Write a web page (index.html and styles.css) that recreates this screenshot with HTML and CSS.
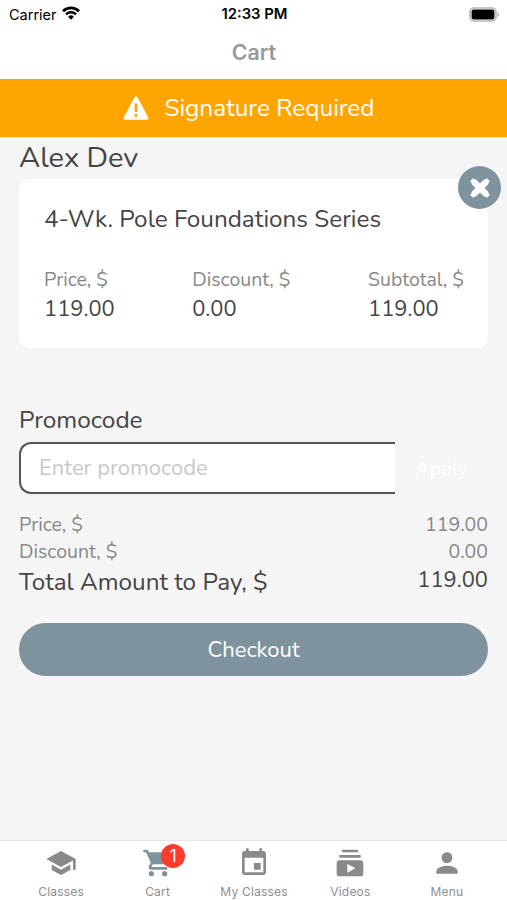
FILE: index.html
```html
<!DOCTYPE html>
<html lang="en">
<head>
  <meta charset="utf-8">
  <title>Cart</title>
  <meta name="viewport" content="width=device-width, initial-scale=1">
  <link rel="stylesheet" href="styles.css">
</head>
<body>
  <div class="status-bar">
    <div class="carrier">
      <span>Carrier</span>
      <svg class="wifi" viewBox="0 0 18 14" width="18" height="14">
        <path d="M1 5.2a11.5 11.5 0 0 1 16 0" fill="none" stroke="#000" stroke-width="2.8"/>
        <path d="M4 8.3a7.2 7.2 0 0 1 10 0" fill="none" stroke="#000" stroke-width="2.4"/>
        <path d="M9 13.7 6.1 10.7a4.2 4.2 0 0 1 5.8 0z"/>
      </svg>
    </div>
    <div class="time">12:33 PM</div>
    <svg class="battery" viewBox="0 0 31 15" width="31" height="15">
      <rect x="1" y="1" width="26" height="13" rx="4" fill="#fff" stroke="#b5b5b5" stroke-width="1.6"/>
      <rect x="2.6" y="2.6" width="22.8" height="9.8" rx="2"/>
      <path d="M28.5 5.5c2 .6 2 3.4 0 4z" fill="#b5b5b5"/>
    </svg>
  </div>

  <header class="title-bar"><h1>Cart</h1></header>

  <div class="banner">
    <svg viewBox="0 0 26 24" width="26" height="24">
      <path d="M11.3 1.5a2 2 0 0 1 3.4 0L25 21c.8 1.4.1 2.8-1.5 2.8h-21C.9 23.8.2 22.4 1 21z" fill="#fff"/>
      <path d="M13 7.5v8.5" stroke="#ffa500" stroke-width="2.6"/>
      <circle cx="13" cy="19.3" r="1.6" fill="#ffa500"/>
    </svg>
    <span>Signature Required</span>
  </div>

  <main>
    <h2 class="client">Alex Dev</h2>
    <section class="card">
      <button class="remove" aria-label="Remove">
        <svg viewBox="0 0 22 22" width="22" height="22">
          <path d="M4.300 4.300l13.400 13.400M17.700 4.300L4.300 17.700" stroke="#fff" stroke-width="4.500" stroke-linecap="square"/>
          <path d="M4.500 4.500l13 13M17.500 4.500l-13 13" stroke="#fff" stroke-width="6.400"/>
        </svg>
      </button>
      <h3>4-Wk. Pole Foundations Series</h3>
      <div class="amounts">
        <div><span class="label">Price, $</span><span class="value">119.00</span></div>
        <div><span class="label">Discount, $</span><span class="value">0.00</span></div>
        <div><span class="label">Subtotal, $</span><span class="value">119.00</span></div>
      </div>
    </section>

    <h3 class="promo-title">Promocode</h3>
    <form class="promo">
      <input type="text" placeholder="Enter promocode">
      <button type="button">Apply</button>
    </form>

    <div class="summary">
      <div class="row"><span class="label">Price, $</span><span class="sum">119.00</span></div>
      <div class="row"><span class="label">Discount, $</span><span class="sum">0.00</span></div>
      <div class="row total"><span>Total Amount to Pay, $</span><span class="value">119.00</span></div>
    </div>

    <button class="checkout">Checkout</button>
  </main>

  <nav class="tabs">
    <a class="tab">
      <svg viewBox="0 0 24 24"><path d="M5 13.18v4L12 21l7-3.82v-4L12 17l-7-3.82zM12 3L1 9l11 6 9-4.91V17h2V9L12 3z"/></svg>
      <span>Classes</span>
    </a>
    <a class="tab active">
      <svg viewBox="0 0 24 24"><path d="M7 18c-1.1 0-1.99.9-1.99 2S5.9 22 7 22s2-.9 2-2-.9-2-2-2zM1 2v2h2l3.6 7.59-1.35 2.45c-.16.28-.25.61-.25.96 0 1.1.9 2 2 2h12v-2H7.42c-.14 0-.25-.11-.25-.25l.03-.12.9-1.63h7.45c.75 0 1.41-.41 1.75-1.03l3.58-6.49c.08-.14.12-.31.12-.48 0-.55-.45-1-1-1H5.21l-.94-2H1zm16 16c-1.1 0-1.99.9-1.99 2s.89 2 1.99 2 2-.9 2-2-.9-2-2-2z"/></svg>
      <b class="badge">1</b>
      <span>Cart</span>
    </a>
    <a class="tab">
      <svg viewBox="0 0 24 24"><path d="M17 12h-5v5h5v-5zM16 1v2H8V1H6v2H5c-1.11 0-1.99.9-1.99 2L3 19c0 1.1.89 2 2 2h14c1.1 0 2-.9 2-2V5c0-1.1-.9-2-2-2h-1V1h-2zm3 18H5V8h14v11z"/></svg>
      <span>My Classes</span>
    </a>
    <a class="tab">
      <svg viewBox="0 0 24 24"><path d="M20 8H4V6h16v2zm-2-6H6v2h12V2zm4 10v8c0 1.1-.9 2-2 2H4c-1.1 0-2-.9-2-2v-8c0-1.1.9-2 2-2h16c1.1 0 2 .9 2 2zm-6 4l-6-3.27v6.53L16 16z"/></svg>
      <span>Videos</span>
    </a>
    <a class="tab">
      <svg viewBox="0 0 24 24"><path d="M12 12c2.21 0 4-1.79 4-4s-1.79-4-4-4-4 1.79-4 4 1.79 4 4 4zm0 2c-2.67 0-8 1.34-8 4v2h16v-2c0-2.66-5.33-4-8-4z"/></svg>
      <span>Menu</span>
    </a>
  </nav>
</body>
</html>
```

FILE: styles.css
```css
* {
  box-sizing: border-box;
}
body {
  margin: 0;
  height: 100vh;
  display: flex;
  flex-direction: column;
  overflow: hidden;
  font-family: Nunito, Lato, sans-serif;
  background: #f5f5f5;
  color: #444;
}
h1, h2, h3 {
  margin: 0;
  font-weight: 400;
}
button, input {
  font-family: inherit;
  border: none;
  padding: 0;
}
.status-bar {
  height: 27px;
  padding: 0 7px 0 9px;
  display: grid;
  grid-template-columns: 1fr auto 1fr;
  align-items: center;
  background: #fff;
  color: #000;
  font: 14.5px/27px Inter, sans-serif;
}
.carrier {
  display: flex;
  align-items: center;
  gap: 5px;
}
.wifi {
  margin-top: -2px;
}
.time {
  padding-top: 1px;
  font-size: 14.8px;
  font-weight: 600;
}
.battery {
  justify-self: end;
}
.title-bar {
  height: 52px;
  background: #fff;
  text-align: center;
}
.title-bar h1 {
  padding-left: 1px;
  font: 600 21.3px/51px Inter, sans-serif;
  color: #999;
}
.banner {
  height: 59px;
  padding-right: 9px;
  display: flex;
  align-items: center;
  justify-content: center;
  gap: 15px;
  background: #ffa500;
  border-bottom: 1px solid #ffe6b5;
  color: #fff;
  font-size: 24.4px;
  line-height: 59px;
}
main {
  flex: 1;
  padding: 0 19px;
}
.client {
  height: 41px;
  font-size: 29px;
  line-height: 40px;
}
.card {
  position: relative;
  height: 169px;
  padding: 24px 24px 0 25px;
  background: #fff;
  border-radius: 10px;
}
.card h3 {
  font-size: 24.3px;
  line-height: 32px;
}
.remove {
  position: absolute;
  top: -13px;
  right: -13px;
  width: 43px;
  height: 43px;
  display: flex;
  align-items: center;
  justify-content: center;
  background: #7f939e;
  border-radius: 50%;
}
.amounts {
  margin-top: 31px;
  display: flex;
  justify-content: space-between;
}
.amounts div {
  display: flex;
  flex-direction: column;
}
.label {
  font-size: 19.5px;
  line-height: 28px;
  color: #888;
}
.value {
  font-size: 21.9px;
  line-height: 31px;
}
.promo-title {
  margin-top: 54px;
  height: 40px;
  font-size: 24.4px;
  line-height: 36px;
}
.promo {
  display: flex;
  height: 52px;
}
.promo input {
  width: 376px;
  padding: 0 0 0 18px;
  border: 2px solid #555;
  border-right: none;
  border-radius: 12px 0 0 12px;
  background: #fff;
  font-size: 22px;
}
.promo input::placeholder {
  color: #c8c8c8;
}
.promo button {
  flex: 1;
  background: transparent;
  color: #fff;
  font-size: 19.5px;
}
.summary {
  margin-top: 17px;
}
.row {
  display: flex;
  justify-content: space-between;
  height: 27px;
}
.sum {
  font-size: 19.5px;
  line-height: 28px;
  color: #888;
}
.total {
  height: 32px;
  font-size: 24.3px;
  line-height: 34px;
}
.total .value {
  line-height: 31px;
}
.checkout {
  display: block;
  width: 100%;
  height: 53px;
  margin-top: 26px;
  border-radius: 27px;
  background: #7f939e;
  color: #fff;
  font-size: 22px;
}
.tabs {
  height: 60px;
  padding: 0 12px 0 13px;
  display: flex;
  background: #fff;
  border-top: 1px solid #e6e6e6;
}
.tab {
  position: relative;
  flex: 1;
  display: flex;
  flex-direction: column;
  align-items: center;
  padding-top: 6px;
  color: #8e8e8e;
  font: 12px/16px Inter, sans-serif;
  letter-spacing: 0.2px;
}
.tab svg {
  flex: none;
  width: 32px;
  height: 32px;
  margin-bottom: 5px;
  fill: #8a8a8a;
}
.tab.active svg {
  fill: #7f939e;
}
.badge {
  position: absolute;
  top: 3px;
  left: 52px;
  width: 24px;
  height: 24px;
  border-radius: 50%;
  background: #ff3b30;
  color: #fff;
  font-size: 17px;
  font-weight: 400;
  line-height: 24px;
  text-align: center;
}
```
